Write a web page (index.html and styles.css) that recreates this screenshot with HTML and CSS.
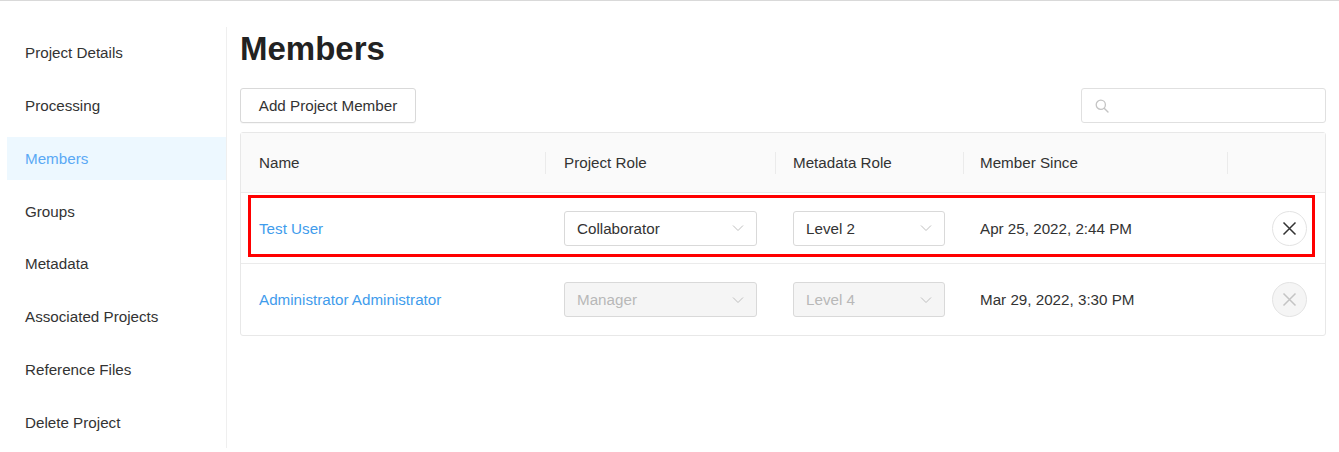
FILE: index.html
```html
<!DOCTYPE html>
<html>
<head>
<meta charset="utf-8">
<link rel="stylesheet" href="styles.css">
</head>
<body>
<div class="topline"></div>
<div class="layout">
  <nav class="sidebar">
    <a class="nav-item">Project Details</a>
    <a class="nav-item">Processing</a>
    <a class="nav-item active">Members</a>
    <a class="nav-item">Groups</a>
    <a class="nav-item">Metadata</a>
    <a class="nav-item">Associated Projects</a>
    <a class="nav-item">Reference Files</a>
    <a class="nav-item">Delete Project</a>
  </nav>
  <main class="main">
    <h1 class="title">Members</h1>
    <div class="toolbar">
      <button class="btn">Add Project Member</button>
      <div class="search">
        <svg class="search-icon" width="14" height="14" viewBox="0 0 14 14"><circle cx="5.8" cy="5.8" r="4.6" fill="none" stroke="#c4c4c4" stroke-width="1.3"/><path d="M9.2 9.2 L13 13" stroke="#c4c4c4" stroke-width="1.4" stroke-linecap="round"/></svg>
      </div>
    </div>
    <div class="table">
      <div class="row head">
        <div class="cell c-name">Name</div>
        <div class="cell c-role"><span class="sep"></span>Project Role</div>
        <div class="cell c-meta"><span class="sep"></span>Metadata Role</div>
        <div class="cell c-since"><span class="sep"></span>Member Since</div>
        <div class="cell c-act"><span class="sep"></span></div>
      </div>
      <div class="row body highlighted">
        <div class="cell c-name"><a class="link">Test User</a></div>
        <div class="cell c-role"><div class="select w-role"><span>Collaborator</span><svg class="chev" width="12" height="8" viewBox="0 0 12 8"><path d="M1 1.5 L6 6.5 L11 1.5" fill="none" stroke="#bfbfbf" stroke-width="1"/></svg></div></div>
        <div class="cell c-meta"><div class="select w-meta"><span>Level 2</span><svg class="chev" width="12" height="8" viewBox="0 0 12 8"><path d="M1 1.5 L6 6.5 L11 1.5" fill="none" stroke="#bfbfbf" stroke-width="1"/></svg></div></div>
        <div class="cell c-since">Apr 25, 2022, 2:44 PM</div>
        <div class="cell c-act"><button class="remove"><svg width="15" height="15" viewBox="0 0 15 15"><path d="M1.5 1.5 L13.5 13.5 M13.5 1.5 L1.5 13.5" stroke="#333" stroke-width="1.5"/></svg></button></div>
        <div class="mark"></div>
      </div>
      <div class="row body last">
        <div class="cell c-name"><a class="link">Administrator Administrator</a></div>
        <div class="cell c-role"><div class="select w-role disabled"><span>Manager</span><svg class="chev" width="12" height="8" viewBox="0 0 12 8"><path d="M1 1.5 L6 6.5 L11 1.5" fill="none" stroke="#bfbfbf" stroke-width="1"/></svg></div></div>
        <div class="cell c-meta"><div class="select w-meta disabled"><span>Level 4</span><svg class="chev" width="12" height="8" viewBox="0 0 12 8"><path d="M1 1.5 L6 6.5 L11 1.5" fill="none" stroke="#bfbfbf" stroke-width="1"/></svg></div></div>
        <div class="cell c-since">Mar 29, 2022, 3:30 PM</div>
        <div class="cell c-act"><button class="remove disabled"><svg width="15" height="15" viewBox="0 0 15 15"><path d="M1.5 1.5 L13.5 13.5 M13.5 1.5 L1.5 13.5" stroke="#c4c4c4" stroke-width="1.5"/></svg></button></div>
      </div>
    </div>
  </main>
</div>
</body>
</html>
```

FILE: styles.css
```css
* { box-sizing: border-box; }
html, body { margin: 0; padding: 0; background: #fff; }
body {
  font-family: "Liberation Sans", Arial, sans-serif;
  font-size: 15.2px;
  color: #333;
  width: 1339px;
  height: 452px;
  overflow: hidden;
}
.topline { height: 1px; background: #d9d9d9; }
.layout {
  display: flex;
  padding: 0 13px 0 7px;
}
.sidebar {
  width: 220px;
  flex: none;
  margin-top: 26px;
  height: 421px;
  border-right: 1px solid #efefef;
  display: flex;
  flex-direction: column;
  gap: 9.85px;
  padding-top: 4px;
}
.nav-item {
  display: flex;
  align-items: center;
  height: 43px;
  flex: none;
  padding-left: 18px;
  color: #333;
}
.nav-item.active {
  background: #edf8ff;
  color: #5aa9f5;
}
.main {
  flex: 1;
  margin-left: 13px;
}
.title {
  margin: 29px 0 0;
  font-size: 33px;
  line-height: 38px;
  font-weight: bold;
  color: #222;
}
.toolbar {
  display: flex;
  justify-content: space-between;
  margin-top: 20px;
}
.btn {
  height: 35px;
  width: 176px;
  border: 1px solid #d9d9d9;
  border-radius: 3px;
  background: #fff;
  font: inherit;
  color: #333;
  padding: 0;
  box-shadow: 0 1px 1px rgba(0,0,0,0.03);
}
.search {
  width: 245px;
  height: 35px;
  border: 1px solid #e0e0e0;
  border-radius: 3px;
  display: flex;
  align-items: center;
  padding-left: 13px;
}
.table {
  margin-top: 9px;
  border: 1px solid #e8e8e8;
  border-radius: 3px;
}
.row {
  display: flex;
  align-items: center;
  position: relative;
}
.row.head {
  height: 60px;
  background: #fafafa;
  border-bottom: 1px solid #ebebeb;
}
.row.body {
  height: 71px;
  border-bottom: 1px solid #ebebeb;
}
.row.body.last { border-bottom: none; height: 71px; }
.cell {
  position: relative;
  height: 100%;
  display: flex;
  align-items: center;
}
.c-name { width: 304px; padding-left: 18px; }
.c-role { width: 230px; padding-left: 19px; }
.c-meta { width: 188px; padding-left: 18px; }
.c-since { width: 264px; padding-left: 17px; }
.c-act { flex: 1; justify-content: flex-end; padding-right: 18px; }
.sep {
  position: absolute;
  left: 0;
  top: 19px;
  width: 1px;
  height: 22px;
  background: #ebebeb;
}
.link { color: #3f9cec; }
.select {
  height: 35px;
  border: 1px solid #d9d9d9;
  border-radius: 3px;
  display: flex;
  align-items: center;
  justify-content: space-between;
  padding: 0 12px 0 12px;
  background: #fff;
}
.w-role { width: 193px; }
.w-meta { width: 152px; }
.select.disabled { background: #f5f5f5; color: #b8b8b8; }
.remove {
  width: 35px;
  height: 35px;
  border-radius: 50%;
  border: 1px solid #e3e3e3;
  background: #fff;
  display: flex;
  align-items: center;
  justify-content: center;
  padding: 0;
}
.remove.disabled { background: #f5f5f5; }
.mark {
  position: absolute;
  left: 7px;
  right: 10px;
  top: 2px;
  bottom: 6px;
  border: 3px solid #ff0000;
  pointer-events: none;
}
```
